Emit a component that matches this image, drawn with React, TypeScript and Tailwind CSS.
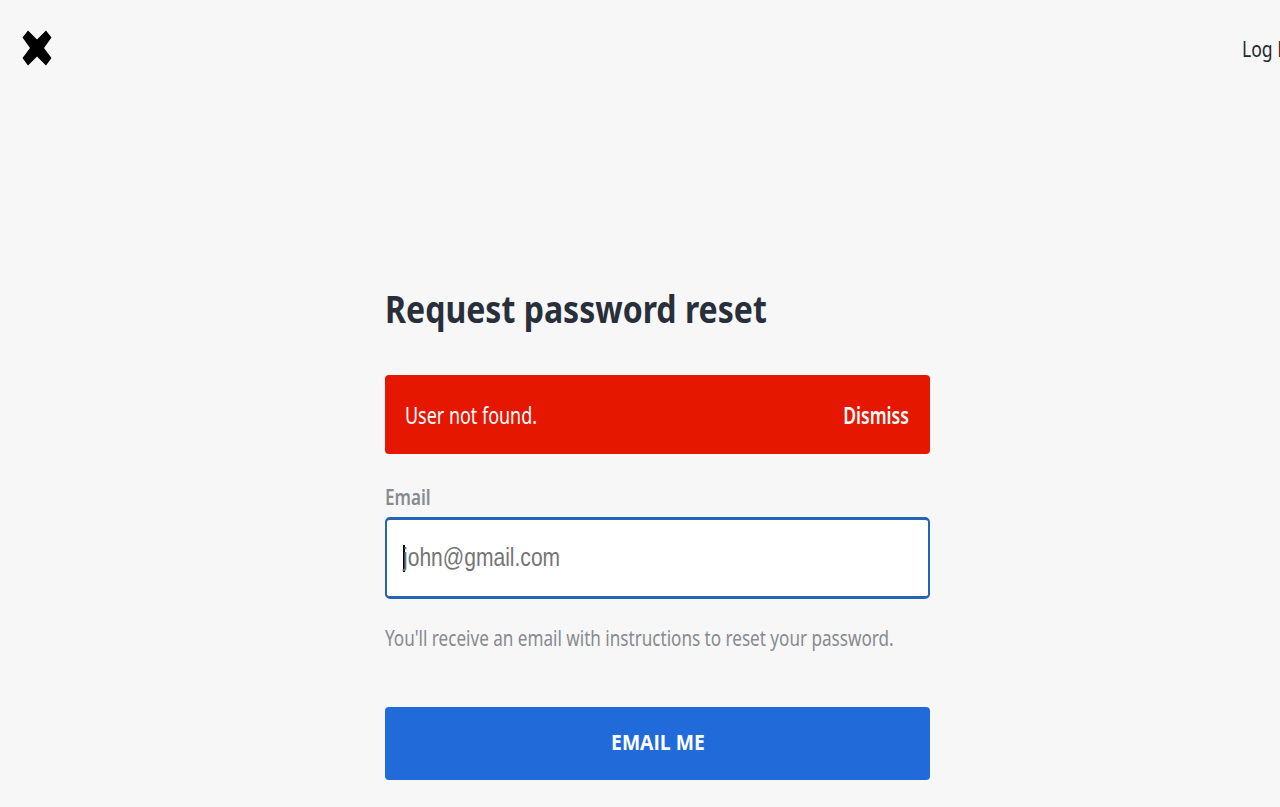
import type { SVGProps } from "react";

export default function App() {
  return (
    <div className="h-[807px] w-full overflow-hidden bg-[#f7f7f7] font-['Noto_Sans',sans-serif]">
      {/* The page is slightly wider than the viewport, so "Log In" runs off the edge. */}
      <div className="w-[1315px]">
        <Header />
        <main className="mx-auto flex w-[545px] flex-col pt-[189px]">
          <h1 className="h-12 text-[38px] leading-[48px] font-bold whitespace-nowrap text-[#282f3a]">
            <span className="inline-block origin-left scale-x-[0.843]">
              Request password reset
            </span>
          </h1>
          <Alert />
          <ResetForm />
        </main>
      </div>
    </div>
  );
}

function Header() {
  return (
    <header className="flex h-[95px] items-center justify-between pl-[22px]">
      <a href="#" aria-label="Home">
        <IconCross className="h-9 w-[30px] text-black" />
      </a>
      <a
        href="#"
        className="w-[73px] text-[22px] leading-8 whitespace-nowrap text-[#24292f]"
      >
        <span className="inline-block origin-left scale-x-[0.8]">
          Log <span className="font-['Open_Sans',sans-serif]">In</span>
        </span>
      </a>
    </header>
  );
}

function Alert() {
  return (
    <div
      role="alert"
      className="mt-[43px] flex h-[79px] items-center justify-between rounded-[4px] bg-[#e51700] px-5 text-[23px] leading-8 text-white"
    >
      <span className="inline-block origin-left scale-x-[0.78]">
        User not found.
      </span>
      <button
        type="button"
        className="mr-px origin-right scale-x-[0.765] font-semibold"
      >
        Dismiss
      </button>
    </div>
  );
}

function ResetForm() {
  return (
    <form className="flex flex-col whitespace-nowrap">
      <label className="mt-[29px] h-7 text-[21px] leading-7 font-semibold text-[#868b90]">
        <span className="inline-block origin-left scale-x-[0.815]">Email</span>
      </label>
      <div className="mt-1.5 flex h-[82px] items-center rounded-[5px] border-x-2 border-y-[3px] border-[#2363b8] bg-white pb-0.5 pl-4">
        <span className="mt-0.5 h-[27px] w-0.5 bg-black" />
        <span className="-ml-0.5 inline-block origin-left scale-x-[0.81] font-['Liberation_Sans',sans-serif] text-[26px] leading-8 text-[#757575]">
          john@gmail.com
        </span>
      </div>
      <p className="mt-[25px] h-7 text-[21px] leading-7 text-[#868b90]">
        <span className="inline-block origin-left scale-x-[0.814]">
          You'll receive an email with instructions to reset your password.
        </span>
      </p>
      <button
        type="button"
        className="mt-[55px] h-[73px] rounded-[4px] bg-[#206bd9] pb-1 font-['Open_Sans',sans-serif] text-[21px] leading-7 font-bold text-white"
      >
        <span className="inline-block scale-x-[0.92]">EMAIL ME</span>
      </button>
    </form>
  );
}

function IconCross(props: SVGProps<SVGSVGElement>) {
  return (
    <svg viewBox="0 0 30 36" fill="currentColor" aria-hidden {...props}>
      <path d="M6 0.5 L15 9.5 L24 0.5 L29.5 7.5 L22 18 L29.5 28 L24 35.5 L15 26.5 L6 35.5 L0.5 28 L8 18 L0.5 7.5 Z" />
    </svg>
  );
}
